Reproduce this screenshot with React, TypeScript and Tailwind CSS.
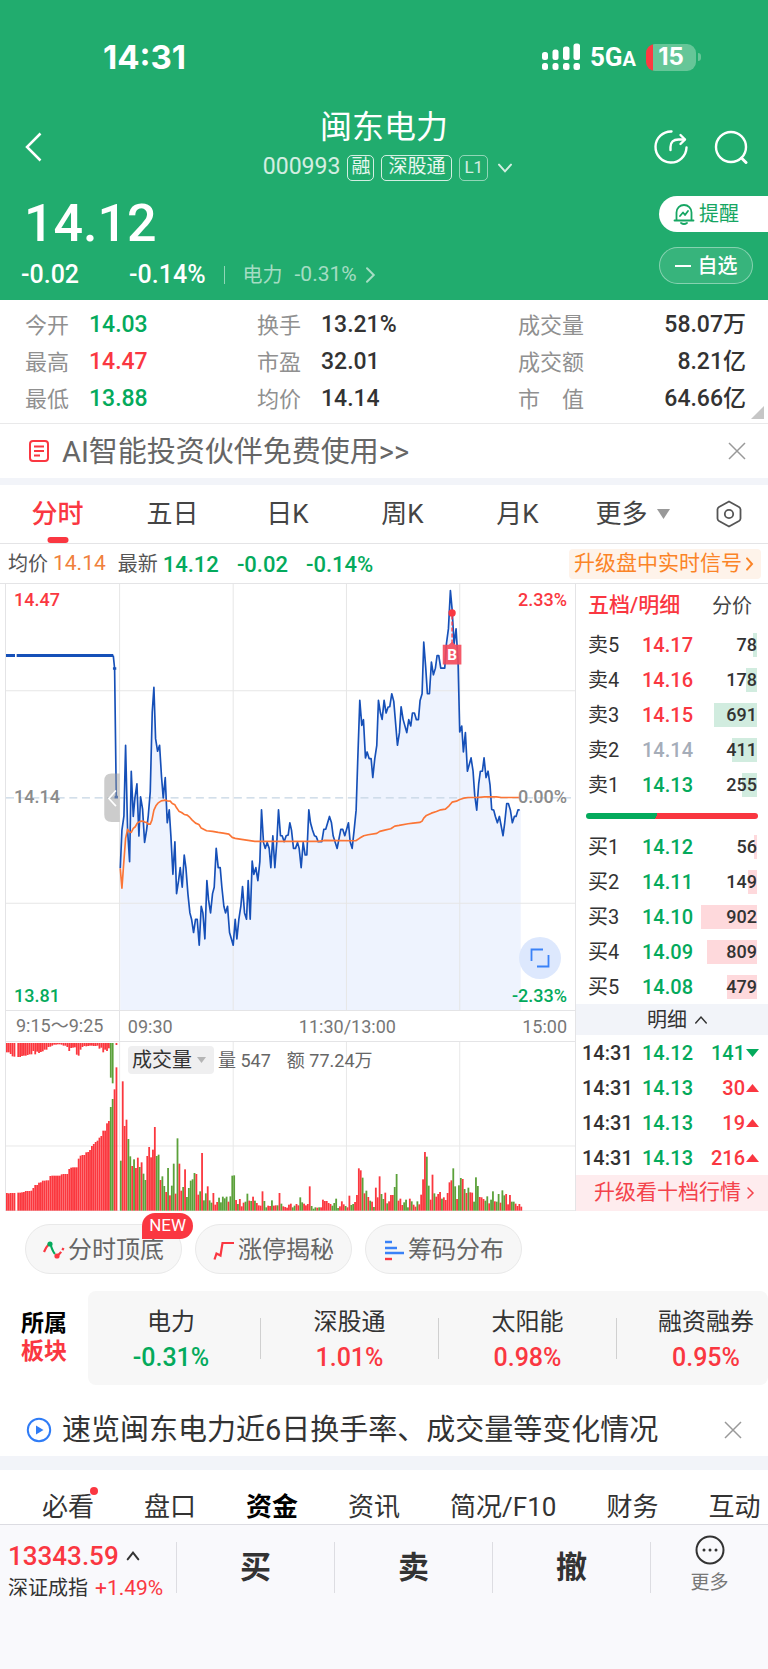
import type { ReactNode } from 'react';

type Tone = 'red' | 'green' | 'gray' | 'ink' | 'orange';

const TONE: Record<Tone, string> = {
  red: 'text-[#fa3741]',
  green: 'text-[#04aa5c]',
  gray: 'text-[#a5adb9]',
  ink: 'text-[#333333]',
  orange: 'text-[#f0803c]',
};

const STATS: { label: string; value: string; tone: Tone }[] = [
  { label: '今开', value: '14.03', tone: 'green' },
  { label: '换手', value: '13.21%', tone: 'ink' },
  { label: '成交量', value: '58.07万', tone: 'ink' },
  { label: '最高', value: '14.47', tone: 'red' },
  { label: '市盈', value: '32.01', tone: 'ink' },
  { label: '成交额', value: '8.21亿', tone: 'ink' },
  { label: '最低', value: '13.88', tone: 'green' },
  { label: '均价', value: '14.14', tone: 'ink' },
  { label: '市值', value: '64.66亿', tone: 'ink' },
];

type Level = { name: string; price: string; volume: number; tone: Tone; bar: number };

const SELLS: Level[] = [
  { name: '卖5', price: '14.17', volume: 78, tone: 'red', bar: 4 },
  { name: '卖4', price: '14.16', volume: 178, tone: 'red', bar: 11 },
  { name: '卖3', price: '14.15', volume: 691, tone: 'red', bar: 43 },
  { name: '卖2', price: '14.14', volume: 411, tone: 'gray', bar: 25 },
  { name: '卖1', price: '14.13', volume: 255, tone: 'green', bar: 15 },
];

const BUYS: Level[] = [
  { name: '买1', price: '14.12', volume: 56, tone: 'green', bar: 3 },
  { name: '买2', price: '14.11', volume: 149, tone: 'green', bar: 9 },
  { name: '买3', price: '14.10', volume: 902, tone: 'green', bar: 56 },
  { name: '买4', price: '14.09', volume: 809, tone: 'green', bar: 50 },
  { name: '买5', price: '14.08', volume: 479, tone: 'green', bar: 30 },
];

const TICKS = [
  { price: '14.12', volume: 141, up: false },
  { price: '14.13', volume: 30, up: true },
  { price: '14.13', volume: 19, up: true },
  { price: '14.13', volume: 216, up: true },
];

const SECTORS = [
  { name: '电力', change: '-0.31%' },
  { name: '深股通', change: '1.01%' },
  { name: '太阳能', change: '0.98%' },
  { name: '融资融券', change: '0.95%' },
];

const PRICE_LINE =
  '361,880 366,765 372,722 377,510 383,765 389,860 394,588 400,724 405,668 411,626 417,783 422,665 428,702 434,802 440,765 445,722 451,650 457,410 462,336 467,490 473,528 479,510 485,607 490,668 496,607 502,743 508,704 513,783 519,898 525,800 530,956 536,917 541,878 547,937 553,840 558,878 564,956 570,1014 575,1033 581,1073 587,1033 592,1033 598,1111 604,994 609,1014 615,1092 621,917 626,975 632,1014 638,956 643,937 649,820 655,878 661,878 666,937 672,994 677,1014 683,994 689,1073 694,1090 700,1111 706,1033 711,1092 717,1033 723,994 728,935 734,1014 740,1033 745,917 751,1033 757,858 762,898 768,878 774,917 780,860 785,704 791,802 796,820 802,802 808,820 813,878 819,782 825,878 831,800 836,704 842,782 847,782 853,800 859,782 865,780 870,743 875,765 881,820 887,820 893,802 898,820 904,878 910,802 916,840 921,840 927,704 932,743 938,765 944,782 949,784 955,800 966,800 972,763 978,762 989,724 995,743 1000,782 1012,820 1023,763 1029,763 1035,782 1046,743 1051,800 1057,820 1063,765 1069,705 1074,550 1080,375 1086,450 1091,433 1097,548 1102,530 1108,550 1114,550 1119,607 1125,550 1131,510 1136,375 1142,413 1147,432 1153,375 1159,413 1165,395 1170,394 1176,355 1182,378 1193,510 1199,472 1204,394 1210,432 1221,472 1227,433 1233,452 1238,413 1244,413 1250,433 1256,433 1261,375 1267,355 1272,200 1278,278 1283,355 1289,355 1295,260 1301,298 1307,278 1312,240 1317,240 1323,278 1335,278 1340,205 1346,160 1352,45 1357,100 1363,205 1369,160 1375,260 1380,470 1386,452 1391,530 1397,472 1403,588 1414,548 1420,588 1425,660 1431,705 1437,625 1442,588 1448,588 1453,548 1459,607 1465,588 1471,630 1476,703 1482,705 1487,724 1493,743 1499,724 1510,782 1515,743 1521,685 1526,685 1532,705 1538,743 1544,724 1549,724 1555,704 1560,704';

const AVERAGE_LINE =
  '361,880 366,940 371,870 377,790 383,763 388,770 394,772 400,760 406,755 412,744 420,739 428,738 434,741 440,742 445,747 451,747 456,735 462,705 468,692 474,684 484,677 496,675 502,677 511,678 517,685 525,689 530,698 537,708 545,712 553,718 562,720 570,727 577,735 587,744 597,748 604,759 620,767 638,769 655,772 670,774 687,777 697,787 706,790 725,793 745,796 765,799 955,799 975,796 1068,797 1080,789 1092,782 1105,779 1131,775 1140,769 1155,765 1173,761 1185,753 1198,751 1225,746 1240,744 1260,742 1267,738 1272,729 1280,721 1295,714 1310,709 1323,704 1337,702 1348,692 1357,681 1370,678 1380,673 1392,669 1405,667 1430,667 1455,665 1490,665 1505,667 1560,667';

// call auction, one bar per sample: matched volume (bottom) and unmatched volume (top)
const MATCHED =
  '53r 52r 53r 53r 53r 0r 54r 54r 55r 56r 59r 59r 59r 60r 68r 77r 77r 84r 85r 90r 90r 91r 91r 104r 105r 105r 105r 105r 105r 109r 110r 110r 110r 125r 129r 130r 130r 130r 156r 165r 167r 167r 175r 176r 182r 194r 200r 206r 210r 219r 224r 240r 240r 262r 269r 311g 335g 364r 430r';
const UNMATCHED =
  '28r 28r 33r 40r 41r 0r 42r 42r 39r 38r 38r 36r 34r 34r 24r 34r 26r 30r 27r 25r 20r 20r 12r 11r 8r 5r 5r 4r 4r 5r 8r 8r 12r 24r 15r 14r 13r 35r 38r 20r 12r 9r 10r 9r 8r 8r 9r 9r 8r 17r 14r 28r 20r 24r 16r 104g 121g 0r 6r';

// continuous trading, one bar per minute
const VOLUME =
  '150g 388r 254r 273r 215g 163g 134r 154g 128r 159r 131g 145r 111g 92g 164r 191r 160r 183r 251r 164g 168g 92r 103g 74g 56r 128g 46r 75g 141g 51r 217g 141r 60r 71g 124r 41g 68g 90g 94g 113g 110r 48r 58g 173r 31g 52g 73r 31g 24g 53r 18r 26r 39g 25g 42g 37g 42g 27r 43g 105g 106g 32r 20g 35r 13r 24r 27g 51g 30r 29g 42r 30g 23r 16r 15r 58r 29g 10g 15r 14r 31g 15r 16r 16g 53r 21g 13r 11r 9r 18r 21r 10g 15g 20r 16r 40g 25g 21r 16r 20r 73r 14g 6g 10g 9r 10g 10r 33r 29r 29r 23r 20r 15g 23g 36g 8g 13r 28r 19r 14g 10r 45r 17g 20g 26r 47r 127r 121r 99g 52r 60g 41r 30g 27r 11g 69r 40r 103r 50g 35g 54r 22g 28r 47r 47r 71g 110g 30r 36r 17r 25g 33g 10g 36r 28g 18r 12r 28g 19r 48r 94r 176r 162g 75g 33r 108r 52g 42r 50r 56r 36g 40r 32r 53r 85r 91r 127g 73g 35r 76g 98g 95r 65g 53r 69g 55r 54r 27g 100g 74g 41r 40r 35r 30g 43g 22r 33g 58g 28r 27g 50g 24r 61g 46g 50r 19r 47r 27g 27g 21r 14r 20r 12r';

function Bars({ data, x, hanging = false }: { data: string; x: number; hanging?: boolean }) {
  return (
    <>
      {data.split(' ').map((item, i) => {
        const h = parseInt(item, 10);
        return (
          <rect
            key={i}
            x={x + i * 5.67}
            y={hanging ? 24 : 527 - h}
            width={5.4}
            height={h}
            fill={item.endsWith('g') ? '#5ba13a' : '#fb373e'}
          />
        );
      })}
    </>
  );
}

function Chevron({ d, className, width = 2 }: { d: string; className: string; width?: number }) {
  return (
    <svg viewBox="0 0 24 24" className={className} fill="none" stroke="currentColor" strokeWidth={width} strokeLinecap="round">
      <path d={d} vectorEffect="non-scaling-stroke" />
    </svg>
  );
}

function CloseButton() {
  return (
    <button aria-label="关闭" className="text-[#999999]">
      <svg viewBox="0 0 18 18" className="size-[18px]" fill="none" stroke="currentColor" strokeWidth="1.5">
        <path d="M1 1l16 16M17 1L1 17" />
      </svg>
    </button>
  );
}

function StatusBar() {
  return (
    <div className="flex h-[42px] items-center justify-between pl-[103px] pr-[67px]">
      <span className="font-[Inter,sans-serif] text-[33px] font-bold leading-none">14:31</span>
      <div className="flex items-center gap-[10px]">
        <svg viewBox="0 0 38 28" className="h-7 w-[38px]" fill="white">
          <rect x="0" y="9" width="6" height="8" rx="2.5" />
          <rect x="10.5" y="6.5" width="6" height="10.5" rx="2.5" />
          <rect x="21" y="3.5" width="6.5" height="13.5" rx="2.5" />
          <rect x="31.5" y="0.5" width="6.5" height="16.5" rx="2.5" />
          <rect x="0" y="20" width="6" height="7" rx="2.5" />
          <rect x="10.5" y="20" width="6" height="7" rx="2.5" />
          <rect x="21" y="20" width="6.5" height="7" rx="2.5" />
          <rect x="31.5" y="20" width="6.5" height="7" rx="2.5" />
        </svg>
        <span className="text-[26px] font-bold leading-none">
          5G<span className="text-[20px]">A</span>
        </span>
        <div className="flex items-center gap-0.5">
          <div className="flex h-[27px] w-[50px] items-center justify-center rounded-[9px] bg-[linear-gradient(90deg,#fc3a41_14%,#66c698_14%)] font-[Inter,sans-serif] text-[24px] font-bold leading-none">
            15
          </div>
          <div className="h-2 w-[3px] rounded-r-full bg-[#66c698]" />
        </div>
      </div>
    </div>
  );
}

function Tag({ children, className }: { children: ReactNode; className: string }) {
  return <span className={`flex h-[26px] items-center rounded-[5px] border ${className}`}>{children}</span>;
}

function Header() {
  return (
    <header className="bg-[#21ac6e] pt-9 text-white">
      <StatusBar />
      <div className="mt-6 grid h-[82px] grid-cols-[1fr_auto_1fr] items-center">
        <button aria-label="返回" className="mt-2 ml-[25px] w-fit">
          <svg viewBox="0 0 17 30" className="h-[30px] w-[17px]" fill="none" stroke="white" strokeWidth="2.5">
            <path d="M15.500 1.500L2 15l13.500 13.500" />
          </svg>
        </button>
        <div className="flex flex-col items-center">
          <h1 className="text-[32px] leading-[44px]">闽东电力</h1>
          <div className="mt-[5px] flex h-7 items-center gap-[7px] pl-2">
            <span className="text-[23px] text-white/80">000993</span>
            <Tag className="border-white/80 px-[3px] text-[19px] text-white/90">融</Tag>
            <Tag className="border-white/80 px-[6px] text-[19px] text-white/90">深股通</Tag>
            <Tag className="border-white/50 px-1 text-[17px] text-white/80">L1</Tag>
            <Chevron d="M3 7l9 10 9-10" className="ml-0.5 size-4 text-white/80" />
          </div>
        </div>
        <div className="mt-2 flex justify-end gap-[26px] pr-[20px]">
          <button aria-label="分享">
            <svg viewBox="0 0 34 34" className="size-[34px]" fill="none" stroke="white" strokeWidth="2.4" strokeLinecap="round" strokeLinejoin="round">
              <path d="M17.500 1.500a15.500 15.500 0 1 0 15 16" />
              <path d="M16.500 20v-3c0-5 3-7.500 8-7.500h6" />
              <path d="M26.500 5l4.500 4.500-4.500 4.500" />
            </svg>
          </button>
          <button aria-label="搜索">
            <svg viewBox="0 0 34 34" className="size-[34px]" fill="none" stroke="white" strokeWidth="2.4" strokeLinecap="round">
              <circle cx="17" cy="17" r="15" />
              <path d="M27.500 28l4.500 4.500" strokeWidth="3" />
            </svg>
          </button>
        </div>
      </div>
      <div className="flex h-[116px] justify-between">
        <div>
          <p className="mt-3 pl-6 text-[52px] font-medium leading-[56px]">14.12</p>
          <div className="mt-[9px] flex h-7 items-center pl-[21px] text-[25px] font-medium">
            <span>-0.02</span>
            <span className="ml-[50px]">-0.14%</span>
            <span className="ml-[18px] h-[18px] w-px bg-white/50" />
            <a href="#sector" className="ml-[18px] flex items-center text-[20px] font-normal text-white/60">
              电力<span className="ml-3 text-[21px]">-0.31%</span>
              <Chevron d="M8 3l9 9-9 9" className="ml-1 size-[18px]" width={2} />
            </a>
          </div>
        </div>
        <div className="w-[109px]">
          <button className="mt-3 flex h-9 w-full items-center gap-1 rounded-l-full bg-white pl-[14px] text-[20px] text-[#16a663]">
            <svg viewBox="0 0 22 22" className="size-[22px]" fill="none" stroke="currentColor" strokeWidth="1.8" strokeLinecap="round" strokeLinejoin="round">
              <path d="M3.500 17V9.500a7.500 7.500 0 0 1 15 0V17" />
              <path d="M1.500 17.500h19" />
              <path d="M8 20q3 2 6 0" />
              <path d="M7 13l3-3.500 2 2.500 3-4" />
            </svg>
            提醒
          </button>
          <button className="mt-[15px] flex h-[37px] w-[94px] items-center justify-center gap-[7px] rounded-full border border-white/40 bg-white/10 text-[20px] font-medium">
            <span className="h-0.5 w-4 bg-white" />
            自选
          </button>
        </div>
      </div>
    </header>
  );
}

function Stats() {
  return (
    <section className="relative border-b border-[#e9e9ea] pt-[7px] pb-[5px]">
      <dl className="grid grid-cols-[232fr_261fr_228fr] pl-[25px] pr-[22px]">
        {STATS.map((s, i) => (
          <div key={s.label} className="flex h-[37px] items-center">
            <dt className="text-[22px] text-[#909090]">
              {s.label === '市值' ? (
                <span className="flex w-[66px] justify-between">
                  <span>市</span>
                  <span>值</span>
                </span>
              ) : (
                s.label
              )}
            </dt>
            <dd className={`text-[23px] font-medium ${TONE[s.tone]} ${i % 3 === 2 ? 'ml-auto' : 'ml-5'}`}>{s.value}</dd>
          </div>
        ))}
      </dl>
      <svg viewBox="0 0 13 13" className="absolute right-1 bottom-1 size-[13px]" fill="#c6c6c6">
        <path d="M13 0v13H0z" />
      </svg>
    </section>
  );
}

function PeriodTabs() {
  return (
    <nav className="flex h-[59px] border-b border-[#e4e4e6] text-[26px] text-[#444444]">
      <button className="relative flex-1 font-medium text-[#fa3741]">
        分时
        <span className="absolute bottom-0 left-1/2 h-[6px] w-[21px] -translate-x-1/2 rounded-[3px] bg-[#fa3741]" />
      </button>
      {['五日', '日K', '周K', '月K'].map((t) => (
        <button key={t} className="flex-1">
          {t}
        </button>
      ))}
      <button className="flex flex-1 items-center justify-center gap-[9px]">
        更多
        <svg viewBox="0 0 13 10" className="h-[10px] w-[13px]" fill="#999999">
          <path d="M0 0h13L6.500 10z" />
        </svg>
      </button>
      <button aria-label="设置" className="flex w-[78px] items-center justify-center">
        <svg viewBox="0 0 28 28" className="size-7" fill="none" stroke="#555555" strokeWidth="1.8" strokeLinejoin="round">
          <path d="M14 1.500l10 5.500q1.500 1 1.500 2.500v9q0 1.500-1.500 2.500l-10 5.500-10-5.500q-1.500-1-1.500-2.500v-9q0-1.500 1.500-2.500z" />
          <circle cx="14" cy="14" r="4.2" />
        </svg>
      </button>
    </nav>
  );
}

function QuoteLine() {
  return (
    <div className="flex h-[39px] items-center pt-px pl-2 pr-[7px] text-[20px] text-[#555555]">
      均价<span className={`ml-[5px] text-[21px] ${TONE.orange}`}>14.14</span>
      <span className="ml-3">最新</span>
      <span className={`ml-[5px] flex gap-[18px] text-[22px] font-medium ${TONE.green}`}>
        <span>14.12</span>
        <span>-0.02</span>
        <span>-0.14%</span>
      </span>
      <a href="#signal" className="ml-auto flex h-[30px] items-center rounded bg-[#fef3ea] pl-[5px] pr-1 text-[21px] text-[#fb8427]">
        升级盘中实时信号
        <Chevron d="M8 3l8 9-8 9" className="h-[18px] w-[15px]" />
      </a>
    </div>
  );
}

function PriceChart() {
  return (
    <div className="relative h-[426px] text-[18px] font-medium leading-6">
      <svg viewBox="18 25 1708 1281" preserveAspectRatio="none" className="absolute inset-0 size-full" fill="none">
        <polygon points={`361,1306 ${PRICE_LINE} 1563,704 1563,1306`} fill="#eef3fe" />
        <g stroke="#e6e6e6" strokeWidth="3">
          <path d="M18 346H1726M18 985H1726M359 25V1306M700 25V1306M1040 25V1306M1380 25V1306" />
        </g>
        <path d="M18 668H1726" stroke="#c5d5e3" strokeWidth="4" strokeDasharray="24 14" />
        <path d="M18 240H45M50 240H340" stroke="#1650b8" strokeWidth="9" />
        <path d="M340 240L344 279L349 665" stroke="#1650b8" strokeWidth="5" />
        <path d="M339 279h10M344 666h10" stroke="#1650b8" strokeWidth="8" />
        <polyline points={PRICE_LINE} stroke="#1650b8" strokeWidth="5" strokeLinejoin="round" />
        <polyline points={AVERAGE_LINE} stroke="#fb7536" strokeWidth="5" strokeLinejoin="round" />
        <path d="M1357 120V205" stroke="#fa3741" strokeWidth="4" strokeDasharray="12 6" />
        <circle cx="1357" cy="112" r="11" fill="#fa3741" />
        <path d="M1329 208h18l10-9 10 9h18v59h-56z" fill="#f4485a" fillOpacity="0.9" />
        <text x="1357" y="254" textAnchor="middle" fill="white" fontSize="46" fontWeight="700">
          B
        </text>
        {/* handle that folds the call auction pane */}
        <path d="M359 595H335q-22 0-22 22v102q0 22 22 22h24z" fill="#999999" fillOpacity="0.5" />
        <path d="M348 646L327 670L348 693" stroke="white" strokeWidth="5" />
      </svg>
      <span className="absolute top-1 left-2 text-[#fa3741]">14.47</span>
      <span className="absolute top-1 right-2 text-[#fa3741]">2.33%</span>
      <span className="absolute top-1/2 left-2 -translate-y-1/2 text-[#8b8b8b]">14.14</span>
      <span className="absolute top-1/2 right-2 -translate-y-1/2 text-[#8b8b8b]">0.00%</span>
      <span className="absolute bottom-0.5 left-2 text-[#04aa5c]">13.81</span>
      <span className="absolute bottom-0.5 right-2 text-[#04aa5c]">-2.33%</span>
      <button
        aria-label="全屏"
        className="absolute right-[14px] bottom-[31px] flex size-[42px] items-center justify-center rounded-full bg-[#dde8fd]"
      >
        <svg viewBox="0 0 20 20" className="size-5" fill="none" stroke="#3a82f7" strokeWidth="1.8">
          <path d="M1.500 13V1.500H13M18.500 7V18.500H7" />
        </svg>
      </button>
    </div>
  );
}

function VolumeChart() {
  return (
    <div className="relative h-[169px]">
      <svg viewBox="18 21 1708 507" preserveAspectRatio="none" className="absolute inset-0 size-full">
        <path
          d="M18 333H1726M18 527H1726M359 21V527M700 21V527M1040 21V527M1380 21V527"
          stroke="#e8e8e8"
          strokeWidth="3"
        />
        <Bars data={MATCHED} x={18} />
        <Bars data={UNMATCHED} x={18} hanging />
        <Bars data={VOLUME} x={360} />
      </svg>
      <div className="absolute top-1 left-[122px] flex h-7 items-center whitespace-nowrap text-[18px] text-[#666666]">
        <button className="flex h-7 items-center gap-[5px] rounded bg-[#efeff0] px-1 text-[20px] text-[#333333]">
          成交量
          <svg viewBox="0 0 9 6" className="mr-1 h-[6px] w-[9px]" fill="#b5b5b5">
            <path d="M0 0h9L4.500 6z" />
          </svg>
        </button>
        <span className="ml-1">量 547</span>
        <span className="ml-4">额 77.24万</span>
      </div>
    </div>
  );
}

function Book({ levels, barColor, label }: { levels: Level[]; barColor: string; label: string }) {
  return (
    <table aria-label={label} className="w-full table-fixed text-[20px] font-medium">
      <tbody>
        {levels.map((l) => (
          <tr key={l.name} className="h-[35px]">
            <th scope="row" className="w-[66px] pl-3 text-left font-normal text-[#333333]">
              {l.name}
            </th>
            <td className={`w-[52px] ${TONE[l.tone]}`}>{l.price}</td>
            <td className="pr-[11px]">
              <div className="relative flex h-6 items-center justify-end text-[#333333]">
                <span className={`absolute inset-y-0 right-0 ${barColor}`} style={{ width: l.bar }} />
                <span className="relative text-[18px]">{l.volume}</span>
              </div>
            </td>
          </tr>
        ))}
      </tbody>
    </table>
  );
}

function OrderPanel() {
  return (
    <aside className="w-[193px] shrink-0 border-l border-[#e4e4e6]">
      <div className="flex h-[43px] items-center justify-between pl-3 pr-4">
        <button className="text-[21px] font-medium text-[#fa3741]">五档/明细</button>
        <button className="text-[20px] text-[#444444]">分价</button>
      </div>
      <Book levels={SELLS} barColor="bg-[#d1ecdf]" label="卖盘" />
      <div className="flex h-[27px] items-center px-[10px]">
        <div className="h-[6px] w-full rounded-full bg-[linear-gradient(115deg,#04aa5c_41%,#f93640_41%)]" />
      </div>
      <Book levels={BUYS} barColor="bg-[#fed9dc]" label="买盘" />
      <button className="flex h-[31px] w-full items-center justify-center gap-[6px] bg-[#f2f4f9] pl-3 text-[20px] text-[#333333]">
        明细
        <Chevron d="M3 17l9-10 9 10" className="h-[14px] w-[16px]" width={1.5} />
      </button>
      <table aria-label="成交明细" className="w-full table-fixed text-[20px] font-medium">
        <tbody>
          {TICKS.map((t, i) => (
            <tr key={i} className="h-[35px]">
              <td className="w-[66px] pl-[6px] text-[#333333]">14:31</td>
              <td className={`w-[52px] ${TONE.green}`}>{t.price}</td>
              <td className={`pr-[9px] ${t.up ? TONE.red : TONE.green}`}>
                <div className="flex items-center justify-end gap-px">
                  {t.volume}
                  <svg viewBox="0 0 13 8" className="h-2 w-[13px]" fill="currentColor">
                    <path d={t.up ? 'M6.500 0L13 8H0z' : 'M6.500 8L13 0H0z'} />
                  </svg>
                </div>
              </td>
            </tr>
          ))}
        </tbody>
      </table>
      <a href="#level2" className="flex h-9 items-center justify-center gap-0.5 bg-[#feecee] pl-2 text-[21px] whitespace-nowrap text-[#f4434c]">
        升级看十档行情
        <Chevron d="M8 4l8 8-8 8" className="h-[18px] w-[15px]" width={1.5} />
      </a>
    </aside>
  );
}

function ToolChips() {
  const chip =
    'relative flex h-[50px] w-[157px] items-center justify-center rounded-full border border-[#e9e9e9] bg-[#f7f7f7] pt-px text-[24px] whitespace-nowrap text-[#666666]';
  return (
    <div className="flex gap-[13px] pt-[13px] pl-[25px]">
      <button className={chip}>
        <svg viewBox="0 0 22 22" className="mr-[3px] size-[22px]" fill="none" stroke="#fa3741" strokeWidth="2.2">
          <path d="M1 13q2-5 5-8" />
          <path d="M8 7q2 6 4 8" stroke="#04aa5c" />
          <path d="M14 17q4-3 6.500-8" strokeDasharray="6 2" />
          <circle cx="7" cy="5" r="2.6" fill="#04aa5c" stroke="none" />
          <circle cx="14" cy="17" r="2.6" fill="#fa3741" stroke="none" />
        </svg>
        分时顶底
        <span className="absolute -top-3 -right-3 flex h-[26px] items-center rounded-full rounded-bl-[4px] bg-[#fa3741] px-[7px] text-[17px] text-white">
          NEW
        </span>
      </button>
      <button className={chip}>
        <svg viewBox="0 0 22 22" className="mr-[3px] size-[22px]" fill="none" stroke="#fa3741" strokeWidth="2.2">
          <path d="M1.500 20.500l2-6 4 2L9.500 4h11.500" />
        </svg>
        涨停揭秘
      </button>
      <button className={chip}>
        <svg viewBox="0 0 22 22" className="mr-[3px] size-[22px]" fill="none" stroke="#3a82f7" strokeWidth="2.4">
          <path d="M2 3h7M2 9h12M2 14h19" />
          <path d="M2 20h7" stroke="#fa3741" />
        </svg>
        筹码分布
      </button>
    </div>
  );
}

function Sectors() {
  return (
    <section id="sector" className="mt-[17px] flex h-[94px]">
      <h2 className="flex w-[88px] shrink-0 flex-col justify-center pl-[21px] text-[23px] font-bold leading-7 text-black">
        所属<span className="text-[#fa3741]">板块</span>
      </h2>
      <div className="flex min-w-0 flex-1 overflow-hidden rounded-lg bg-[#f7f7f7]">
        {SECTORS.map((s, i) => (
          <div key={s.name} className={`flex shrink-0 items-center ${i === 0 ? 'w-[173px]' : 'w-[178px]'}`}>
            <div className={`flex-1 pt-[3px] text-center leading-9 ${i === 0 ? 'pr-[6px]' : ''}`}>
              <p className="text-[24px] text-[#333333]">{s.name}</p>
              <p className={`text-[25px] font-medium ${s.change.startsWith('-') ? TONE.green : TONE.red}`}>{s.change}</p>
            </div>
            {i < 3 && <span className="h-[41px] w-px bg-[#d0d0d0]" />}
          </div>
        ))}
      </div>
    </section>
  );
}

function InfoTabs() {
  return (
    <nav className="flex h-[54px] items-center gap-[50px] overflow-hidden pt-5 pl-[42px] text-[26px] whitespace-nowrap text-[#333333]">
      <button className="relative">
        必看
        <span className="absolute -top-px -right-1 size-2 rounded-full bg-[#fa3741]" />
      </button>
      {['盘口', '资金', '资讯', '简况/F10', '财务', '互动'].map((t) => (
        <button key={t} className={t === '资金' ? 'font-bold text-black' : ''}>
          {t}
        </button>
      ))}
    </nav>
  );
}

function TradeBar() {
  return (
    <footer className="h-[145px] border-t border-[#dcdce2] bg-[#f9f9fc] pt-2">
      <div className="flex h-[68px] items-center">
        <div className="w-[176px] pt-[10px] pl-2 whitespace-nowrap">
          <button className="flex h-8 items-center gap-[6px] text-[26px] font-medium text-[#fa3741]">
            13343.59
            <Chevron d="M4 17l8-10 8 10" className="size-4 text-[#333333]" />
          </button>
          <p className="flex gap-[7px] text-[20px] leading-8 text-[#333333]">
            深证成指 <span className={`text-[21px] ${TONE.red}`}>+1.49%</span>
          </p>
        </div>
        {['买', '卖', '撤'].map((t) => (
          <button key={t} className="h-[51px] flex-1 border-l border-[#dddde2] text-[31px] font-bold leading-none text-[#333333]">
            {t}
          </button>
        ))}
        <div className="h-[51px] w-px bg-[#dddde2]" />
        <button className="flex w-[117px] flex-col items-center gap-0.5 text-[19px] leading-8 text-[#777777]">
          <svg viewBox="0 0 30 30" className="size-[30px]" fill="none" stroke="#333333" strokeWidth="2">
            <circle cx="15" cy="15" r="13.5" />
            <path d="M9 15h.01M15 15h.01M21 15h.01" strokeWidth="3" strokeLinecap="round" />
          </svg>
          更多
        </button>
      </div>
    </footer>
  );
}

export default function App() {
  return (
    <div className="w-full overflow-hidden bg-white font-[Roboto,'Noto_Sans_CJK_SC',sans-serif]">
      <Header />
      <Stats />
      <div className="flex h-[54px] items-center pl-7 pr-[22px]">
        <svg viewBox="0 0 22 22" className="size-[22px]" fill="none" stroke="#fa3741" strokeWidth="2">
          <rect x="2" y="1" width="18" height="20" rx="3" />
          <path d="M6 6.500h10M6 11h10M6 15.500h6" strokeWidth="1.8" />
        </svg>
        <a href="#ai" className="ml-3 pt-1 text-[29px] text-[#666666]">
          AI智能投资伙伴免费使用&gt;&gt;
        </a>
        <span className="ml-auto flex">
          <CloseButton />
        </span>
      </div>
      <div className="h-[7px] bg-[#f2f4f9]" />
      <PeriodTabs />
      <QuoteLine />
      <main className="flex border-t border-[#e4e4e6]">
        <div className="min-w-0 flex-1 pl-[5px]">
          <div className="border-l border-[#e4e4e6]">
            <PriceChart />
            <div className="relative flex h-8 items-center border-y border-[#e4e4e6] text-[18px] text-[#777777]">
              <span className="w-1/5 border-r border-[#e4e4e6] pl-[10px] leading-[30px] whitespace-nowrap">9:15～9:25</span>
              <span className="pl-2">09:30</span>
              <span className="absolute left-3/5 -translate-x-1/2">11:30/13:00</span>
              <span className="ml-auto pr-2">15:00</span>
            </div>
            <VolumeChart />
          </div>
        </div>
        <OrderPanel />
      </main>
      <ToolChips />
      <Sectors />
      <div className="flex h-[71px] items-center pt-[19px] pl-[26px] pr-[26px]">
        <svg viewBox="0 0 26 26" className="size-[26px]" fill="none" stroke="#2f7cf6" strokeWidth="2">
          <circle cx="13" cy="13" r="11.2" />
          <path d="M10 8.500v9l7.500-4.500z" fill="#2f7cf6" stroke="none" />
        </svg>
        <a href="#news" className="ml-[10px] pt-0.5 text-[29px] whitespace-nowrap text-[#333333]">
          速览闽东电力近6日换手率、成交量等变化情况
        </a>
        <span className="ml-auto flex">
          <CloseButton />
        </span>
      </div>
      <div className="h-[14px] bg-[#f2f4f9]" />
      <InfoTabs />
      <TradeBar />
    </div>
  );
}
